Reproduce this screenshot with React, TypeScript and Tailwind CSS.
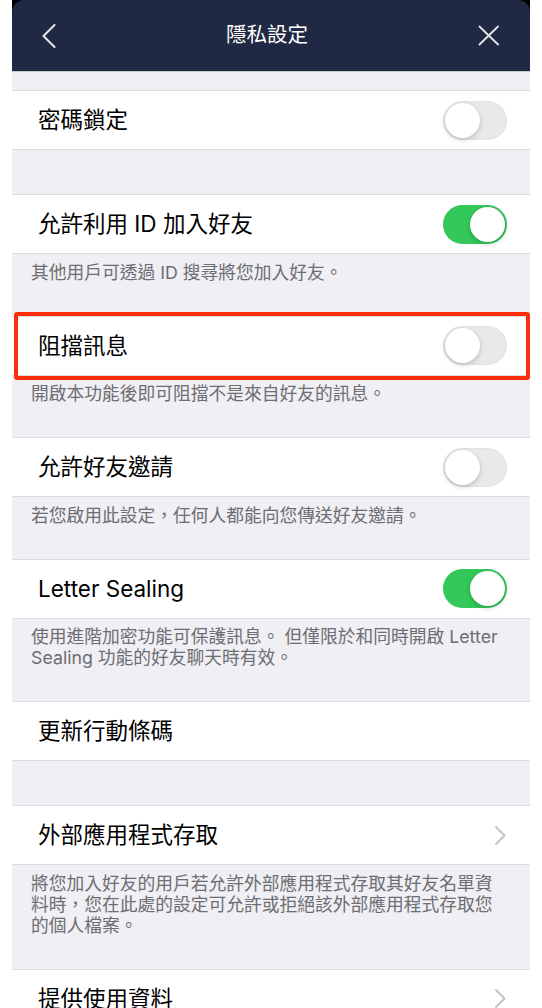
import React from 'react';

const font = { fontFamily: 'Inter, "Noto Sans CJK TC", sans-serif' };

const Toggle: React.FC<{ on?: boolean }> = ({ on }) => (
  <div
    className={
      on
        ? 'flex h-[39px] w-[64px] items-center justify-end rounded-full bg-[#34c759] p-[2px]'
        : 'flex h-[39px] w-[64px] items-center justify-start rounded-full border border-[#e2e2e4] bg-[#e9e9eb] p-[1px]'
    }
  >
    <div className="h-[35px] w-[35px] rounded-full bg-white shadow-[0_2px_5px_rgba(0,0,0,0.18),0_0_0_0.5px_rgba(0,0,0,0.05)]" />
  </div>
);

const Chevron: React.FC = () => (
  <svg width="13" height="21" viewBox="0 0 13 21" fill="none">
    <path d="M2 2l8.5 8.5L2 19" stroke="#c4c4c8" strokeWidth="2" strokeLinecap="round" strokeLinejoin="round" />
  </svg>
);

const Row: React.FC<{ label: string; right?: React.ReactNode }> = ({ label, right }) => (
  <div className="flex h-[60px] items-center justify-between border-y border-[#dcdce0] bg-white pl-[26px] pr-[23px]">
    <span className="text-[22.5px] text-black">{label}</span>
    {right}
  </div>
);

const Note: React.FC<{ children: React.ReactNode }> = ({ children }) => (
  <p className="px-[19px] pt-[7.5px] pb-[33px] text-[17.75px] leading-[21px] text-[#6d6d72]">{children}</p>
);

export default function App() {
  return (
    <div className="min-h-screen bg-white px-[12px]" style={font}>
      <div className="min-h-screen bg-[#efeff4]">
        {/* nav bar */}
        <div className="bg-black">
          <div className="relative flex h-[72px] items-center justify-between rounded-t-[12px] border-b border-[#c9cad0] bg-[#1f2943] px-[30px]">
            <svg width="14" height="24" viewBox="0 0 14 24" fill="none">
              <path d="M12.5 1L1.5 12l11 11" stroke="#e6e7ea" strokeWidth="2" strokeLinecap="round" strokeLinejoin="round" />
            </svg>
            <span className="text-[20.5px] text-white">隱私設定</span>
            <svg width="22" height="21" viewBox="0 0 22 21" fill="none">
              <path d="M1.5 1.5l18.5 18M20 1.5L1.5 19.5" stroke="#e6e7ea" strokeWidth="1.8" strokeLinecap="round" />
            </svg>
          </div>
        </div>

        <div className="h-[18px]" />
        <Row label="密碼鎖定" right={<Toggle />} />
        <div className="h-[44px]" />

        <Row label="允許利用 ID 加入好友" right={<Toggle on />} />
        <Note>其他用戶可透過 ID 搜尋將您加入好友。</Note>

        <div className="relative">
          <Row label="阻擋訊息" right={<Toggle />} />
          <div className="pointer-events-none absolute -top-[4px] -bottom-[4px] left-[2px] right-0 rounded-[3px] border-[4px] border-[#fd2c0b]" />
        </div>
        <Note>開啟本功能後即可阻擋不是來自好友的訊息。</Note>

        <Row label="允許好友邀請" right={<Toggle />} />
        <Note>若您啟用此設定，任何人都能向您傳送好友邀請。</Note>

        <Row label="Letter Sealing" right={<Toggle on />} />
        <Note>
          使用進階加密功能可保護訊息。 但僅限於和同時開啟 Letter
          <br />
          Sealing 功能的好友聊天時有效。
        </Note>

        <Row label="更新行動條碼" />
        <div className="h-[44px]" />

        <Row label="外部應用程式存取" right={<Chevron />} />
        <Note>
          將您加入好友的用戶若允許外部應用程式存取其好友名單資
          <br />
          料時，您在此處的設定可允許或拒絕該外部應用程式存取您
          <br />
          的個人檔案。
        </Note>

        <Row label="提供使用資料" right={<Chevron />} />
      </div>
    </div>
  );
}
